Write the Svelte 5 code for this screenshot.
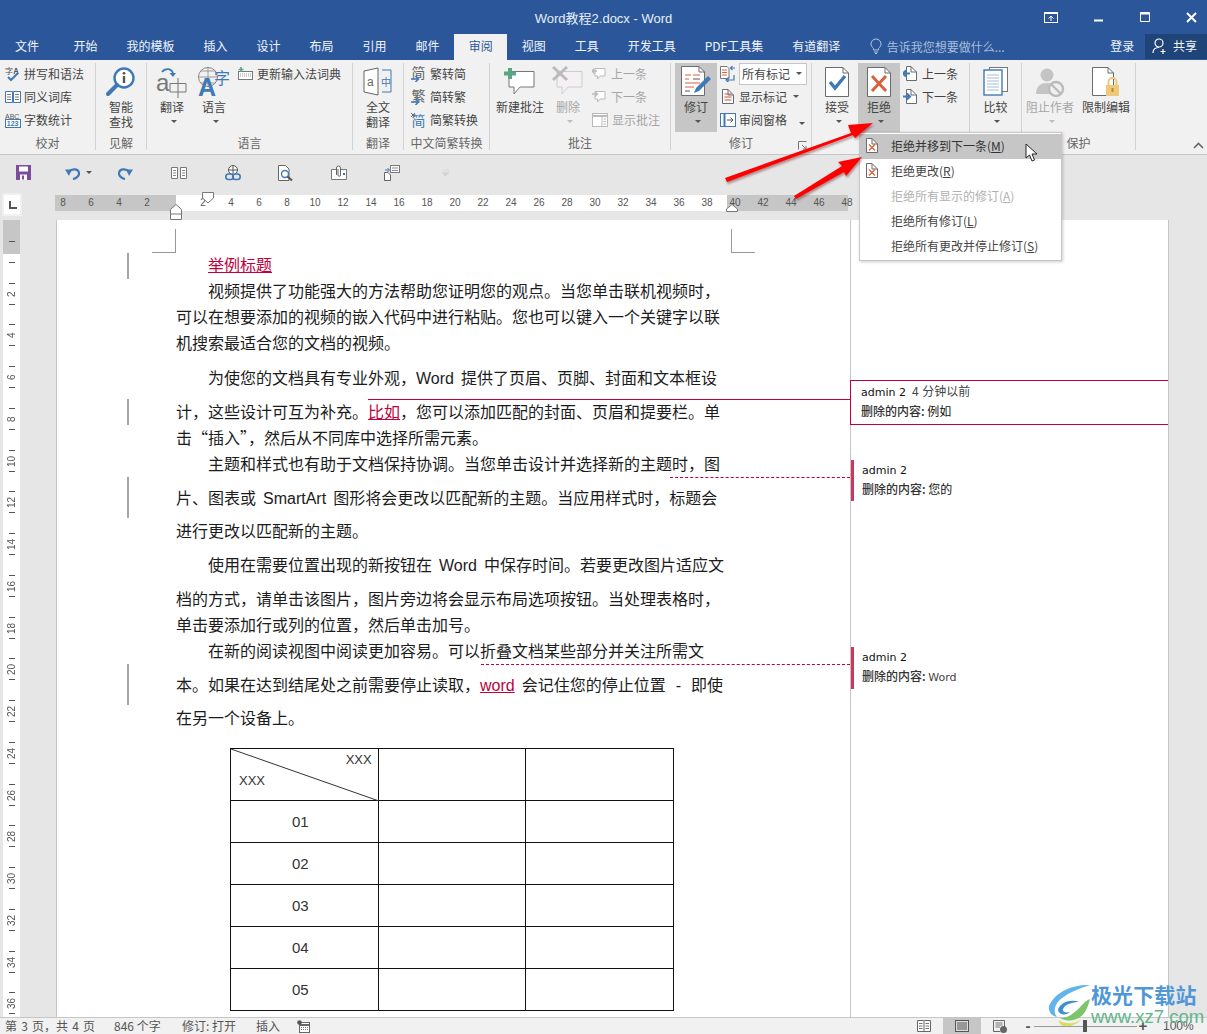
<script>
  const tabs = ['开始', '我的模板', '插入', '设计', '布局', '引用', '邮件', '审阅', '视图', '工具', '开发工具', 'PDF工具集', '有道翻译'];

  const marks = [];
  for (let n = 8; n >= 2; n -= 2) marks.push(n);
  marks.push('');
  for (let n = 2; n <= 48; n += 2) marks.push(n);

  const sideMarks = [''];
  for (let n = 2; n <= 38; n += 2) sideMarks.push(n);

  const lines = [
    { indent: true, parts: [{ t: '举例标题', k: 'ins' }] },
    { indent: true, parts: [{ t: '视频提供了功能强大的方法帮助您证明您的观点。当您单击联机视频时，' }] },
    { parts: [{ t: '可以在想要添加的视频的嵌入代码中进行粘贴。您也可以键入一个关键字以联' }] },
    { parts: [{ t: '机搜索最适合您的文档的视频。' }] },
    { gap: 9, indent: true, parts: [{ t: '为使您的文档具有专业外观，' }, { t: 'Word', k: 'en tight' }, { t: '提供了页眉、页脚、封面和文本框设' }] },
    { gap: 8, parts: [{ t: '计，这些设计可互为补充。' }, { t: '比如', k: 'ins' }, { t: '，您可以添加匹配的封面、页眉和提要栏。单' }] },
    { parts: [{ t: '击“插入”，然后从不同库中选择所需元素。' }] },
    { indent: true, parts: [{ t: '主题和样式也有助于文档保持协调。当您单击设计并选择新的主题时，图' }] },
    { gap: 8, parts: [{ t: '片、图表或' }, { t: 'SmartArt', k: 'en' }, { t: '图形将会更改以匹配新的主题。当应用样式时，标题会' }] },
    { gap: 7, parts: [{ t: '进行更改以匹配新的主题。' }] },
    { gap: 8, indent: true, parts: [{ t: '使用在需要位置出现的新按钮在' }, { t: 'Word', k: 'en' }, { t: '中保存时间。若要更改图片适应文' }] },
    { gap: 8, parts: [{ t: '档的方式，请单击该图片，图片旁边将会显示布局选项按钮。当处理表格时，' }] },
    { parts: [{ t: '单击要添加行或列的位置，然后单击加号。' }] },
    { indent: true, parts: [{ t: '在新的阅读视图中阅读更加容易。可以折叠文档某些部分并关注所需文' }] },
    { gap: 8, parts: [{ t: '本。如果在达到结尾处之前需要停止读取，' }, { t: 'word', k: 'en tight ins' }, { t: '会记住您的停止位置' }, { t: '-', k: 'en dash' }, { t: '即使' }] },
    { gap: 7, parts: [{ t: '在另一个设备上。' }] }
  ];

  const rows = ['01', '02', '03', '04', '05'];
</script>

{#snippet page(w, h)}
  <path d="M{0.5} {0.5}H{w - 6}L{w - 0.5} 6V{h - 0.5}H0.5Z" fill="#fff" stroke="#6b6b6b" />
  <path d="M{w - 6} 0.5V6H{w - 0.5}" fill="none" stroke="#6b6b6b" />
{/snippet}

{#snippet caret()}
  <span class="caret"></span>
{/snippet}

{#snippet bubble(c)}
  <path d="M3 1.5H13V9H8L5.5 12V9H3Z" fill="#fff" stroke={c} />
{/snippet}

<div class="app">
  <header class="title">
    <span></span>
    <div class="title-text">Word教程2.docx - Word</div>
    <div class="win">
      <svg width="14" height="12" viewBox="0 0 14 12"><rect x="0.5" y="1.5" width="13" height="10" fill="none" stroke="#fff" /><path d="M0 2H14" stroke="#fff" stroke-width="2" /><path d="M7 10V5M4.5 7.5L7 5L9.5 7.5" fill="none" stroke="#fff" /></svg>
      <svg width="10" height="10" viewBox="0 0 10 10"><path d="M0 8.5H9" stroke="#fff" stroke-width="2" /></svg>
      <svg width="10" height="10" viewBox="0 0 10 10"><path d="M0.5 0.5H9.5V9.5H0.5Z" fill="none" stroke="#fff" /><path d="M0 1.5H10" stroke="#fff" stroke-width="2" /></svg>
      <svg width="11" height="11" viewBox="0 0 11 11"><path d="M1 1L10 10M10 1L1 10" stroke="#fff" stroke-width="2" /></svg>
    </div>
  </header>

  <nav class="tabs">
    <div class="tab file">文件</div>
    {#each tabs as t}
      <div class="tab" class:on={t === '审阅'}>{t}</div>
    {/each}
    <div class="tell">
      <svg width="12" height="16" viewBox="0 0 12 16"><path d="M3.5 10.5C2 9 1 7.8 1 6A5 5 0 0 1 11 6C11 7.8 10 9 8.5 10.5V12H3.5ZM4 14H8M5 15.5H7" fill="none" stroke="#b7c8e0" /></svg>
      <span>告诉我您想要做什么...</span>
    </div>
    <div class="login">登录</div>
    <div class="share">
      <svg width="16" height="16" viewBox="0 0 16 16"><circle cx="7" cy="5" r="4" fill="none" stroke="#fff" stroke-width="1.2" /><path d="M1 15C1 11 4 9.5 7 9.5M11 11V16M8.5 13.5H13.5" fill="none" stroke="#fff" stroke-width="1.2" /></svg>
      <span>共享</span>
    </div>
  </nav>

  <section class="ribbon">
    <div class="group g1">
      <div class="body col">
        <div class="row">
          <svg class="si" width="16" height="16" viewBox="0 0 16 16"><text x="0" y="8" font-size="8" fill="#555">字</text><text x="8.5" y="7.5" font-size="8" font-weight="700" fill="#555">A</text><path d="M3 11L6 14L13 7" fill="none" stroke="#3f79b6" stroke-width="2" /></svg>
          拼写和语法
        </div>
        <div class="row">
          <svg class="si" width="16" height="14" viewBox="0 0 16 14"><path d="M0.5 1.5H7.5V12.5H0.5ZM8.5 1.5H15.5V12.5H8.5Z" fill="#fff" stroke="#3f79b6" /><path d="M2 4.5H6M2 7H6M2 9.5H6M10 4.5H14M10 7H14M10 9.5H14" stroke="#777" /></svg>
          同义词库
        </div>
        <div class="row">
          <svg class="si" width="16" height="16" viewBox="0 0 16 16"><text x="0" y="6.5" font-size="7" fill="#555" font-family="Liberation Sans">ABC</text><rect x="0.5" y="7.5" width="15" height="8" fill="#fff" stroke="#3f79b6" /><text x="1.8" y="14" font-size="7" font-weight="700" fill="#3f79b6" font-family="Liberation Sans">123</text></svg>
          字数统计
        </div>
      </div>
      <div class="glabel">校对</div>
    </div>

    <div class="group g2">
      <div class="body center">
        <div class="big">
          <svg class="bi" width="30" height="30" viewBox="0 0 30 30"><circle cx="18" cy="11" r="9.5" fill="#fff" stroke="#3f79b6" stroke-width="2.4" /><path d="M11 18L2 27" stroke="#3f79b6" stroke-width="4" stroke-linecap="round" /><path d="M18 9V16" stroke="#555" stroke-width="2.4" /><circle cx="18" cy="6.3" r="1.4" fill="#555" /></svg>
          <span>智能</span><span>查找</span>
        </div>
      </div>
      <div class="glabel">见解</div>
    </div>

    <div class="group g3">
      <div class="body">
        <div class="big">
          <svg class="bi" width="32" height="32" viewBox="0 0 32 32"><text x="0" y="25" font-size="24" fill="#777" font-family="Liberation Sans">a</text><path d="M14 17.5H30V26H14ZM22 12V32" fill="none" stroke="#777" /><path d="M6 6C9 2 15 2 17 7" fill="none" stroke="#3f79b6" stroke-width="1.8" /><path d="M13.5 7H20L17 11Z" fill="#3f79b6" /></svg>
          <span>翻译</span>{@render caret()}
        </div>
        <div class="big">
          <svg class="bi" width="34" height="32" viewBox="0 0 34 32"><circle cx="11" cy="11" r="9.5" fill="none" stroke="#888" /><path d="M1.5 11H21M11 1.5V21M4 5H18M4 17H18" fill="none" stroke="#888" stroke-width="0.8" /><text x="1" y="30" font-size="25" font-weight="700" fill="#3f79b6" font-family="Liberation Sans">A</text><text x="17" y="18" font-size="16" fill="#3f79b6">字</text></svg>
          <span>语言</span>{@render caret()}
        </div>
        <div class="col list">
          <div class="row">
            <svg class="si" width="15" height="14" viewBox="0 0 15 14"><rect x="0.5" y="4.5" width="14" height="8" fill="#fff" stroke="#777" /><path d="M2 7H13M2 9H13" stroke="#999" stroke-dasharray="1 1" /><path d="M3 0V5M0.5 2.5H5.5" stroke="#5ba585" stroke-width="1.6" /></svg>
            更新输入法词典
          </div>
        </div>
      </div>
      <div class="glabel">语言</div>
    </div>

    <div class="group g4">
      <div class="body center">
        <div class="big">
          <svg class="bi" width="30" height="30" viewBox="0 0 30 30"><path d="M1 4L15 1V28L1 25Z" fill="#fff" stroke="#666" /><text x="4" y="19" font-size="12" fill="#666" font-family="Liberation Sans">a</text><path d="M19 3H28V25H19" fill="none" stroke="#3f79b6" /><text x="18" y="19" font-size="10" fill="#3f79b6">中</text></svg>
          <span>全文</span><span>翻译</span>
        </div>
      </div>
      <div class="glabel">翻译</div>
    </div>

    <div class="group g5">
      <div class="body col">
        <div class="row">
          <svg class="si" width="15" height="16" viewBox="0 0 15 16"><text x="0.5" y="12" font-size="14" fill="#666">简</text><path d="M0 13H7M4.5 10L7.5 13L4.5 16" fill="none" stroke="#3f79b6" stroke-width="1.5" /></svg>
          繁转简
        </div>
        <div class="row">
          <svg class="si" width="15" height="16" viewBox="0 0 15 16"><text x="0.5" y="12" font-size="14" fill="#666">繁</text><path d="M0 13H7M4.5 10L7.5 13L4.5 16" fill="none" stroke="#3f79b6" stroke-width="1.5" /></svg>
          简转繁
        </div>
        <div class="row">
          <svg class="si" width="15" height="16" viewBox="0 0 15 16"><text x="0.5" y="14" font-size="14" fill="#3f79b6">简</text><path d="M0 1L4 5M4 1L0 5" stroke="#666" /></svg>
          简繁转换
        </div>
      </div>
      <div class="glabel">中文简繁转换</div>
    </div>

    <div class="group g6">
      <div class="body">
        <div class="big wide">
          <svg class="bi" width="32" height="30" viewBox="0 0 32 30"><path d="M5 4.5H30V20H16L10 27V20H5Z" fill="#fff" stroke="#777" /><path d="M0 6.5H12M6 1V12" stroke="#5ba585" stroke-width="4" /></svg>
          <span>新建批注</span>
        </div>
        <div class="big rm off">
          <svg class="bi" width="32" height="30" viewBox="0 0 32 30"><path d="M5 4.5H30V20H16L10 27V20H5Z" fill="#f4f0f4" stroke="#ccc" /><path d="M1 0L15 13M15 0L1 13" stroke="#bbb" stroke-width="3" /></svg>
          <span>删除</span>{@render caret()}
        </div>
        <div class="col list l6">
          <div class="row off">
            <svg class="si" width="15" height="14" viewBox="0 0 15 14">{@render bubble('#bbb')}<path d="M0 4H5M2.5 1.5L0 4L2.5 6.5" fill="none" stroke="#bbb" stroke-width="1.4" /></svg>
            上一条
          </div>
          <div class="row off">
            <svg class="si" width="15" height="14" viewBox="0 0 15 14">{@render bubble('#bbb')}<path d="M0 4H5M3 1.5L5.5 4L3 6.5" fill="none" stroke="#bbb" stroke-width="1.4" /></svg>
            下一条
          </div>
          <div class="row off">
            <svg class="si" width="16" height="14" viewBox="0 0 16 14"><rect x="0.5" y="0.5" width="15" height="13" fill="#fff" stroke="#bbb" /><path d="M0 3H16" stroke="#bbb" stroke-width="2" /><path d="M10 3V14M11.5 6H14M11.5 8.5H14M11.5 11H14" stroke="#bbb" /></svg>
            显示批注
          </div>
        </div>
      </div>
      <div class="glabel">批注</div>
    </div>

    <div class="group g7">
      <div class="body">
        <div class="big active">
          <svg class="bi" width="32" height="32" viewBox="0 0 32 32"><g transform="translate(1 0)">{@render page(24, 30)}</g><path d="M5 9H11M13 9H20M5 13H9M5 17H20M5 21H14" stroke="#d8613c" /><path d="M13 13H20M5 25H10" stroke="#555" /><path d="M14 27L16 22L28 10L31 13L19 25Z" fill="#3f79b6" /></svg>
          <span>修订</span>{@render caret()}
        </div>
        <div class="col list l7">
          <div class="row">
            <svg class="si" width="16" height="16" viewBox="0 0 16 16"><path d="M0.5 0.5H7L9 2.5V12.5H0.5Z" fill="#fff" stroke="#777" /><path d="M2 4H7M2 6.5H7M2 9H7" stroke="#d8613c" /><path d="M11 2H15M12.5 0L10.5 2L12.5 4M8 14H14V9M6 14L8 12V16Z" fill="none" stroke="#3f79b6" stroke-width="1.2" /></svg>
            <div class="select">所有标记{@render caret()}</div>
          </div>
          <div class="row">
            <svg class="si" width="16" height="16" viewBox="0 0 16 16"><g transform="translate(2 0)">{@render page(12, 15)}</g><path d="M4.5 5H11.5M4.5 8H11.5M4.5 11H11.5" stroke="#c8553a" /></svg>
            显示标记{@render caret()}
          </div>
          <div class="row">
            <svg class="si" width="16" height="14" viewBox="0 0 16 14"><rect x="0.5" y="0.5" width="15" height="13" fill="#fff" stroke="#3f79b6" /><path d="M4.5 0V14" stroke="#3f79b6" stroke-width="2" /><path d="M7 7H13M10.5 4.5L13 7L10.5 9.5" fill="none" stroke="#555" /></svg>
            审阅窗格<span class="spaced">{@render caret()}</span>
          </div>
        </div>
      </div>
      <div class="glabel">修订</div>
      <svg class="launch" width="9" height="9" viewBox="0 0 9 9"><path d="M0.5 8.5V0.5H8.5M4 4L8 8M8 5V8H5" fill="none" stroke="#777" /></svg>
    </div>

    <div class="group g8">
      <div class="body">
        <div class="big">
          <svg class="bi" width="24" height="30" viewBox="0 0 24 30">{@render page(24, 30)}<path d="M5 15L10 21L20 9" fill="none" stroke="#3f79b6" stroke-width="3.4" /></svg>
          <span>接受</span>{@render caret()}
        </div>
        <div class="big active">
          <svg class="bi" width="24" height="30" viewBox="0 0 24 30">{@render page(24, 30)}<path d="M5 9L19 24M19 9L5 24" stroke="#d8613c" stroke-width="3" /></svg>
          <span>拒绝</span>{@render caret()}
        </div>
        <div class="col list">
          <div class="row">
            <svg class="si" width="15" height="16" viewBox="0 0 15 16"><g transform="translate(3 0)">{@render page(11, 15)}</g><path d="M0 7.5H7M3 4.5L0 7.5L3 10.5" fill="none" stroke="#3f79b6" stroke-width="2" /></svg>
            上一条
          </div>
          <div class="row">
            <svg class="si" width="15" height="16" viewBox="0 0 15 16"><g transform="translate(3 0)">{@render page(11, 15)}</g><path d="M0 7.5H7M4 4.5L7 7.5L4 10.5" fill="none" stroke="#3f79b6" stroke-width="2" /></svg>
            下一条
          </div>
        </div>
      </div>
    </div>

    <div class="group g9">
      <div class="body center">
        <div class="big">
          <svg class="bi" width="26" height="30" viewBox="0 0 26 30"><rect x="6.5" y="0.5" width="18" height="24" fill="#fff" stroke="#777" /><rect x="1" y="3" width="18" height="25" fill="#fff" stroke="#3f79b6" stroke-width="1.4" /><path d="M4 8H16M4 11H16M4 14H16M4 17H16M4 20H16M4 23H16" stroke="#a3bcd8" /></svg>
          <span>比较</span>{@render caret()}
        </div>
      </div>
    </div>

    <div class="group g10">
      <div class="body">
        <div class="big wide off">
          <svg class="bi" width="30" height="30" viewBox="0 0 30 30"><circle cx="12" cy="8" r="6.5" fill="#c4c4c4" /><path d="M1 27C1 19 6 16 12 16C16 16 17 18 17 21L16 27Z" fill="#c4c4c4" /><circle cx="21" cy="22" r="7" fill="#f1f1f1" stroke="#bbb" stroke-width="2.4" /><path d="M16 17L26 27" stroke="#bbb" stroke-width="2.4" /></svg>
          <span>阻止作者</span>{@render caret()}
        </div>
        <div class="big wide">
          <svg class="bi" width="28" height="30" viewBox="0 0 28 30">{@render page(22, 29)}<rect x="14" y="18" width="13" height="11" fill="#efc87a" /><path d="M16.5 18V15A4 4 0 0 1 24.5 15V18" fill="none" stroke="#efc87a" stroke-width="2" /><rect x="19.5" y="21" width="2" height="4" fill="#b98b35" /></svg>
          <span>限制编辑</span>
        </div>
      </div>
      <div class="glabel">保护</div>
    </div>

    <svg class="collapse" width="11" height="7" viewBox="0 0 11 7"><path d="M1 6L5.5 1.5L10 6" fill="none" stroke="#666" stroke-width="1.6" /></svg>
  </section>

  <div class="qat">
    <div class="cell first">
      <svg width="15" height="15" viewBox="0 0 15 15"><path d="M0 0H15V15H0Z" fill="#7d4c9e" /><rect x="3" y="1.5" width="9" height="5" fill="#fff" /><rect x="4" y="9.5" width="7" height="5.5" fill="#fff" /><rect x="6" y="10.5" width="2" height="4" fill="#7d4c9e" /></svg>
    </div>
    <div class="cell undo">
      <svg width="15" height="14" viewBox="0 0 15 14"><path d="M4 7C5 3 13 1.5 14 7C14.5 10 11 12.5 8 13" fill="none" stroke="#3f79b6" stroke-width="2.2" /><path d="M0 3.5L6.5 3.5L4 10Z" fill="#3f79b6" /></svg>
      {@render caret()}
    </div>
    <div class="cell">
      <svg width="15" height="14" viewBox="0 0 15 14"><path d="M11 7C10 3 2 1.5 1 7C0.5 10 4 12.5 7 13" fill="none" stroke="#3f79b6" stroke-width="2.2" /><path d="M15 3.5L8.5 3.5L11 10Z" fill="#3f79b6" /></svg>
    </div>
    <div class="cell">
      <svg width="16" height="12" viewBox="0 0 16 12"><path d="M0.5 0.5H6.5V11.5H0.5ZM9.5 0.5H15.5V11.5H9.5Z" fill="#fff" stroke="#777" /><path d="M2 3.5H5M2 6H5M2 8.5H5M11 3.5H14M11 6H14M11 8.5H14" stroke="#888" /></svg>
    </div>
    <div class="cell">
      <svg width="16" height="16" viewBox="0 0 16 16"><circle cx="8" cy="5" r="4.5" fill="#fff" stroke="#555" /><path d="M3.5 5H12.5M8 0.5V9" stroke="#555" /><rect x="0.8" y="9" width="7.5" height="5.5" rx="2.7" fill="none" stroke="#3f79b6" stroke-width="1.6" /><rect x="7.7" y="9" width="7.5" height="5.5" rx="2.7" fill="none" stroke="#3f79b6" stroke-width="1.6" /></svg>
    </div>
    <div class="cell">
      <svg width="15" height="16" viewBox="0 0 15 16"><path d="M0.5 0.5H7.5L11 4V15.5H0.5Z" fill="#fff" stroke="#666" /><circle cx="7" cy="9" r="3.5" fill="#fff" stroke="#3f79b6" stroke-width="1.4" /><path d="M9.5 11.5L14 15.5" stroke="#555" stroke-width="2" /></svg>
    </div>
    <div class="cell">
      <svg width="16" height="15" viewBox="0 0 16 15"><path d="M0.5 4.5H15.5V14.5H0.5Z" fill="#fff" stroke="#777" /><path d="M5.5 10V3A2 2 0 0 1 9.5 3V10A1.2 1.2 0 0 1 7 10V4" fill="#fff" stroke="#666" /><rect x="12" y="8" width="2" height="2" fill="#3f79b6" /></svg>
    </div>
    <div class="cell">
      <svg width="16" height="16" viewBox="0 0 16 16"><path d="M0.5 7.5H4L6.5 10V15.5H0.5Z" fill="#fff" stroke="#666" /><rect x="6.5" y="0.5" width="9" height="7" fill="#fff" stroke="#777" /><path d="M8 3H14M8 5.5H14" stroke="#888" /><path d="M1 5H5M3.5 3L5.5 5L3.5 7" fill="none" stroke="#3f79b6" /></svg>
    </div>
    <div class="cell faint">
      <svg width="7" height="8" viewBox="0 0 7 8"><path d="M0 1H7M0 3.5H7L3.5 7.5Z" fill="#d4d4d4" stroke="#d4d4d4" stroke-width="0.6" /></svg>
    </div>
  </div>

  <div class="ruler-row">
    <div class="tabstop"><span></span></div>
    <div class="ruler">
      <div class="ruler-margin"></div>
      <div class="ruler-text"></div>
      <div class="ruler-margin right"></div>
      <div class="ruler-nums">
        {#each marks as m}
          <span>{m}</span>
        {/each}
      </div>
      <svg class="indent-top" width="12" height="14" viewBox="0 0 12 14"><path d="M0.5 0.5H11.5V6L6 11L0.5 6Z" fill="#fff" stroke="#777" /></svg>
      <svg class="indent-bottom" width="12" height="16" viewBox="0 0 12 16"><path d="M0.5 5.5L6 0.5L11.5 5.5V15.5H0.5ZM0.5 10H11.5" fill="#fff" stroke="#777" /></svg>
      <svg class="indent-right" width="12" height="8" viewBox="0 0 12 8"><path d="M0.5 7.5V5L6 0.5L11.5 5V7.5Z" fill="#fff" stroke="#777" /></svg>
    </div>
  </div>

  <div class="work">
    <div class="vruler">
      <div class="vdark"></div>
      <div class="vmarks">
        {#each sideMarks as m}
          <div class="vcell"><i></i><b>{m}</b><i></i></div>
        {/each}
      </div>
    </div>

    <div class="page">
      <div class="doc">
        <span class="crop left"></span>
        <span class="crop right"></span>
        <span class="bar" style="top:33px;height:26px"></span>
        <span class="bar" style="top:179px;height:26px"></span>
        <span class="bar" style="top:257px;height:41px"></span>
        <span class="bar" style="top:444px;height:41px"></span>
        <span class="link solid" style="left:311px;width:482px;top:179px"></span>
        <span class="link" style="left:613px;width:180px;top:257px"></span>
        <span class="link" style="left:424px;width:369px;top:444px"></span>

        {#each lines as l}
          <div class="line" class:indent={l.indent} style:margin-top="{l.gap || 0}px">
            {#each l.parts as p}<span class={p.k}>{p.t}</span>{/each}
          </div>
        {/each}

        <table>
          <tbody>
            <tr class="head">
              <td class="diag">
                <svg width="148" height="52" viewBox="0 0 148 52"><path d="M0 0L148 52" stroke="#333" /></svg>
                <span class="xa">XXX</span>
                <span class="xb">XXX</span>
              </td>
              <td></td>
              <td></td>
            </tr>
            {#each rows as r}
              <tr>
                <td class="num">{r}</td>
                <td></td>
                <td></td>
              </tr>
            {/each}
          </tbody>
        </table>
      </div>

      <aside class="notes">
        <div class="note first">
          <div><span class="who">admin 2</span><span class="ago">4 分钟以前</span></div>
          <div><span class="del">删除的内容:</span> 例如</div>
        </div>
        <div class="note second">
          <div><span class="who">admin 2</span></div>
          <div><span class="del">删除的内容:</span> 您的</div>
        </div>
        <div class="note third">
          <div><span class="who">admin 2</span></div>
          <div><span class="del">删除的内容:</span> <span class="when">Word</span></div>
        </div>
      </aside>
    </div>
  </div>

  <footer class="status">
    <span class="s1">第 3 页，共 4 页</span>
    <span class="s2">846 个字</span>
    <span class="s3">修订: 打开</span>
    <span class="s4">插入</span>
    <svg width="13" height="13" viewBox="0 0 13 13"><rect x="2.5" y="2.5" width="10" height="10" fill="#fff" stroke="#666" /><path d="M2 5H13" stroke="#666" stroke-width="2" /><path d="M4 7.5H11M4 9.5H11" stroke="#777" stroke-dasharray="1 1" /><circle cx="2.5" cy="2.5" r="2.3" fill="#555" /></svg>
    <div class="views">
      <div class="view">
        <svg width="14" height="12" viewBox="0 0 14 12"><path d="M0.5 0.5H6.5L7 1L7.5 0.5H13.5V11.5H0.5ZM7 1V11.5" fill="#fff" stroke="#666" /><path d="M2 3.5H5.5M2 6H5.5M2 8.5H5.5M8.5 3.5H12M8.5 6H12M8.5 8.5H12" stroke="#777" /></svg>
      </div>
      <div class="view on">
        <svg width="14" height="12" viewBox="0 0 14 12"><rect x="0.5" y="0.5" width="13" height="11" fill="#dcdcdc" stroke="#555" /><path d="M2 3H12M2 5H12M2 7H12M2 9H12" stroke="#555" /></svg>
      </div>
      <div class="view">
        <svg width="14" height="13" viewBox="0 0 14 13"><path d="M0.5 0.5H11.5V9" fill="none" stroke="#666" /><path d="M0.5 0.5V11.5H7" fill="none" stroke="#666" /><path d="M2.5 3H9.5M2.5 5H9.5M2.5 7H7" stroke="#777" /><circle cx="10.5" cy="9.5" r="3.5" fill="#666" /></svg>
      </div>
    </div>
    <div class="zoom">
      <span class="zm">-</span>
      <div class="slider"><span class="thumb"></span></div>
      <span class="zm">+</span>
      <span class="pct">100%</span>
    </div>
  </footer>

  <!-- dropdown for the 拒绝 button, open over the ribbon and the page -->
  <div class="menu">
    <div class="item hover">
      <svg width="12" height="15" viewBox="0 0 12 15">{@render page(12, 15)}<path d="M3 6.5L9 12.5M9 6.5L3 12.5" stroke="#d8613c" stroke-width="1.3" /></svg>
      <span>拒绝并移到下一条(<u>M</u>)</span>
    </div>
    <div class="item">
      <svg width="12" height="15" viewBox="0 0 12 15">{@render page(12, 15)}<path d="M3 6.5L9 12.5M9 6.5L3 12.5" stroke="#d8613c" stroke-width="1.3" /></svg>
      <span>拒绝更改(<u>R</u>)</span>
    </div>
    <div class="item dim"><span>拒绝所有显示的修订(<u>A</u>)</span></div>
    <div class="item"><span>拒绝所有修订(<u>L</u>)</span></div>
    <div class="item"><span>拒绝所有更改并停止修订(<u>S</u>)</span></div>
  </div>

  <svg class="pointer" width="14" height="20" viewBox="0 0 14 20"><path d="M1 1V15L4.5 12L7 18L9.5 17L7 11H12Z" fill="#fff" stroke="#222" /></svg>

  <svg class="arrows" width="1207" height="1034" viewBox="0 0 1207 1034">
    <path d="M725 178L851 133L848 125L873 123L855 138L853 135L727 182Z" fill="#f00" />
    <path d="M794 196L842 166L838 162L862 157L846 176L844 172L796 199Z" fill="#f00" />
  </svg>

  <div class="mark">
    <svg width="46" height="50" viewBox="0 0 46 50">
      <path d="M42 3C28 2 8 8 1 24C0 30 4 34 9 35C5 30 6 22 14 16C22 10 32 6 42 3Z" fill="#62b4ea" />
      <path d="M10 28C12 20 24 17 31 20C25 20 17 22 15 27C14 30 18 31 22 30C18 34 11 33 10 28Z" fill="#3b8fcf" />
      <path d="M42 17C36 19 34 24 28 29C22 34 18 36 12 36C20 41 32 38 37 30C39 26 41 22 42 17Z" fill="#7cc56a" />
      <path d="M10 38C18 43 28 42 33 37C29 43 20 46 13 43Z" fill="#d8dc60" />
    </svg>
    <div class="mark-text">
      <div class="mk1">极光下载站</div>
      <div class="mk2">www.xz7.com</div>
    </div>
  </div>
</div>

<style>
  :global(body) {
    margin: 0;
    background: #e6e6e6;
  }

  .app {
    position: relative;
    width: 1207px;
    height: 1034px;
    overflow: hidden;
    display: flex;
    flex-direction: column;
    font-family: "Noto Sans CJK SC", "Liberation Sans", sans-serif;
    font-size: 12px;
    color: #444;
  }

  .title {
    height: 34px;
    flex: none;
    background: #2b579a;
    display: grid;
    grid-template-columns: 1fr auto 1fr;
    align-items: center;
    color: #fff;
  }

  .title-text {
    font-size: 13px;
    font-family: "Liberation Sans", "Noto Sans CJK SC", sans-serif;
    color: #e8eef6;
  }

  .win {
    display: flex;
    justify-content: flex-end;
    align-items: center;
    gap: 36px;
    padding-right: 10px;
  }

  .tabs {
    height: 26px;
    flex: none;
    background: #2b579a;
    display: flex;
    align-items: stretch;
    color: #f2f5fa;
  }

  .tab {
    padding: 0 14.5px 2px;
    line-height: 24px;
    white-space: nowrap;
  }

  .tab.file {
    padding: 0 20px 2px 15px;
  }

  .tab.on {
    background: #f1f1f1;
    color: #2b579a;
  }

  .tell {
    margin-left: 15px;
    display: flex;
    align-items: center;
    gap: 5px;
    color: #a9bdd9;
    width: 241px;
    padding-bottom: 2px;
  }

  .login {
    line-height: 24px;
    width: 35px;
  }

  .share {
    width: 62px;
    background: #1f4478;
    display: flex;
    align-items: center;
    gap: 5px;
    padding: 0 0 2px 7px;
    box-sizing: border-box;
    height: 25px;
  }

  .ribbon {
    position: relative;
    height: 95px;
    flex: none;
    box-sizing: border-box;
    background: #f1f1f1;
    border-bottom: 1px solid #c6c6c6;
    display: flex;
  }

  .group {
    position: relative;
    box-sizing: border-box;
    margin-top: 3px;
    height: 87px;
    border-right: 1px solid #d2d2d2;
    display: flex;
    flex-direction: column;
    flex: none;
  }

  .body {
    height: 69px;
    display: flex;
  }

  .body.col,
  .col {
    display: flex;
    flex-direction: column;
  }

  .body.center {
    justify-content: center;
  }

  .glabel {
    text-align: center;
    line-height: 21px;
    color: #666;
  }

  .g1 { width: 96px; }
  .g2 { width: 51px; }
  .g3 { width: 206px; }
  .g4 { width: 51px; }
  .g5 { width: 86px; }
  .g6 { width: 181px; }
  .g7 { width: 141px; }
  .g8 { width: 158px; }
  .g9 { width: 52px; }
  .g10 { width: 114px; }

  .g1 .body { padding-left: 5px; }
  .g1 .row { gap: 3px; }
  .g3 .body { padding-left: 4px; }
  .g5 .body { padding-left: 7px; }
  .g6 .body { padding-left: 2px; }
  .g7 .body { padding-left: 4px; }
  .g8 .body { padding-left: 4px; }

  .list { margin-left: 3px; }
  .l6 { margin-left: 6px; }

  .row {
    height: 23px;
    box-sizing: border-box;
    padding-bottom: 2px;
    display: flex;
    align-items: center;
    white-space: nowrap;
    gap: 4px;
  }

  .l7 .row { gap: 3px; }

  .si { flex: none; }

  .big {
    width: 42px;
    height: 69px;
    box-sizing: border-box;
    display: flex;
    flex-direction: column;
    align-items: center;
    line-height: 15px;
    flex: none;
  }

  .big.wide { width: 56px; }
  .big.rm { width: 36px; margin-left: 2px; }

  .bi {
    height: 32px;
    margin: 3px 0 1px;
    flex: none;
  }

  .big .caret { margin-top: 6px; }

  .active { background: #c6c6c6; }

  .off { color: #a6a6a6; }

  .caret {
    display: inline-block;
    width: 0;
    height: 0;
    border: 3px solid transparent;
    border-top: 3.5px solid #555;
    border-bottom: 0;
    margin-left: 3px;
  }

  .off .caret { border-top-color: #bbb; }

  .spaced { margin-left: 6px; }

  .select {
    width: 68px;
    height: 22px;
    box-sizing: border-box;
    border: 1px solid #c6c6c6;
    background: #fff;
    display: flex;
    align-items: center;
    justify-content: space-between;
    padding: 0 4px 0 2px;
  }

  .launch {
    position: absolute;
    right: 4px;
    bottom: 0;
  }

  .collapse {
    position: absolute;
    right: 3px;
    bottom: 5px;
  }

  .qat {
    height: 35px;
    flex: none;
    background: #e6e6e6;
    display: flex;
    align-items: center;
  }

  .cell {
    width: 53.3px;
    flex: none;
    display: flex;
    justify-content: center;
    align-items: center;
  }

  .cell.first { width: 46px; }

  .cell.undo {
    justify-content: flex-start;
    padding-left: 19px;
    box-sizing: border-box;
    gap: 3px;
  }

  .ruler-row {
    height: 30px;
    flex: none;
    background: #e6e6e6;
    display: flex;
  }

  .tabstop {
    width: 20px;
    height: 23px;
    margin: 3px 0 0 2px;
    box-sizing: border-box;
    background: #fff;
    border: 2px solid #f0f0f0;
    position: relative;
    flex: none;
  }

  .tabstop span {
    position: absolute;
    left: 5px;
    top: 6px;
    width: 6px;
    height: 6px;
    border-left: 2px solid #555;
    border-bottom: 2px solid #555;
  }

  .ruler {
    position: relative;
    margin: 5px 0 0 33px;
    width: 793px;
    height: 16px;
    display: flex;
  }

  .ruler-margin {
    width: 121px;
    background: #c6c6c6;
  }

  .ruler-margin.right { width: 121px; }

  .ruler-text {
    width: 551px;
    background: #fff;
  }

  .ruler-nums {
    position: absolute;
    left: -6px;
    top: 0;
    display: flex;
    font-family: "Liberation Sans", sans-serif;
    font-size: 10px;
    line-height: 16px;
    color: #555;
  }

  .ruler-nums span {
    width: 28px;
    text-align: center;
  }

  .indent-top {
    position: absolute;
    left: 147px;
    top: -3px;
  }

  .indent-bottom {
    position: absolute;
    left: 115px;
    top: 9px;
  }

  .indent-right {
    position: absolute;
    left: 671px;
    top: 9px;
  }

  .work {
    flex: 1;
    min-height: 0;
    background: #e6e6e6;
    display: flex;
    border-bottom: 1px solid #c6c6c6;
  }

  .vruler {
    position: relative;
    width: 17px;
    margin-left: 3px;
    background: #fff;
    overflow: hidden;
    flex: none;
  }

  .vdark {
    height: 34px;
    background: #c6c6c6;
  }

  .vmarks {
    position: absolute;
    left: 0;
    top: 11px;
    width: 100%;
  }

  .vcell {
    height: 41.75px;
    display: flex;
    flex-direction: column;
    align-items: center;
    justify-content: center;
    gap: 3px;
  }

  .vcell i {
    width: 6px;
    height: 1px;
    background: #555;
    flex: none;
  }

  .vcell b {
    height: 14px;
    font-weight: 400;
    font-family: "Liberation Sans", sans-serif;
    font-size: 10px;
    line-height: 17px;
    color: #555;
    writing-mode: vertical-rl;
    transform: rotate(180deg);
    text-align: center;
  }

  .page {
    margin-left: 36px;
    width: 1111px;
    background: #fff;
    border-left: 1px solid #c6c6c6;
    border-right: 1px solid #c6c6c6;
    display: flex;
    box-sizing: content-box;
  }

  .doc {
    position: relative;
    width: 793px;
    flex: none;
    box-sizing: border-box;
    padding: 31px 0 0 119px;
    font-size: 16px;
    color: #1c1c1c;
  }

  .crop {
    position: absolute;
    top: 9px;
    width: 23px;
    height: 23px;
    border-bottom: 1px solid #999;
  }

  .crop.left {
    left: 95px;
    border-right: 1px solid #999;
  }

  .crop.right {
    left: 674px;
    border-left: 1px solid #999;
  }

  .bar {
    position: absolute;
    left: 70px;
    width: 2px;
    background: #a6a6a6;
  }

  .link {
    position: absolute;
    height: 0;
    border-top: 1px dashed #c0003c;
  }

  .link.solid {
    border-top-style: solid;
  }

  .line {
    height: 26px;
    line-height: 26px;
    white-space: nowrap;
  }

  .line.indent {
    padding-left: 32px;
  }

  .en {
    font-family: "Liberation Sans", sans-serif;
    margin: 0 7px;
  }

  .tight {
    margin-left: 0;
  }

  .dash {
    margin: 0 10px;
  }

  .ins {
    color: #c0003c;
    text-decoration: underline;
  }

  table {
    margin: 18px 0 0 54px;
    border-collapse: collapse;
    table-layout: fixed;
    width: 444px;
    font-family: "Liberation Sans", sans-serif;
    font-size: 15px;
    color: #333;
  }

  td {
    border: 1px solid #111;
    height: 41px;
    padding: 0;
    text-align: center;
  }

  .num {
    padding-right: 8px;
  }

  .head td {
    height: 51px;
  }

  .diag {
    position: relative;
  }

  .diag svg {
    position: absolute;
    left: 0;
    top: 0;
  }

  .xa,
  .xb {
    position: absolute;
    font-size: 13px;
  }

  .xa {
    right: 6px;
    top: 3px;
  }

  .xb {
    left: 8px;
    top: 24px;
  }

  .notes {
    flex: 1;
    border-left: 1px solid #c6c6c6;
    font-size: 12px;
    color: #111;
    line-height: 18px;
  }

  .note {
    box-sizing: border-box;
    padding-left: 10px;
    margin-left: -1px;
  }

  .note.first {
    margin-top: 160px;
    height: 45px;
    padding-top: 1px;
    border: 1px solid #c0003c;
    border-right: 0;
  }

  .note.second {
    margin-top: 35px;
    height: 41px;
    border-left: 3px solid #c8385f;
    margin-left: 0;
    padding-left: 8px;
  }

  .note.third {
    margin-top: 146px;
    height: 42px;
    border-left: 3px solid #c8385f;
    margin-left: 0;
    padding-left: 8px;
  }

  .who,
  .when {
    font-family: "DejaVu Sans", "Noto Sans CJK SC", sans-serif;
    font-size: 11px;
  }

  .when {
    color: #444;
  }

  .ago {
    margin-left: 6px;
    color: #444;
    word-spacing: 1px;
  }

  .del {
    font-weight: 500;
    color: #333;
  }

  .status {
    height: 16px;
    flex: none;
    background: #f1f1f1;
    display: flex;
    align-items: center;
    font-size: 12px;
    line-height: 16px;
    color: #555;
    white-space: nowrap;
  }

  .s1 { margin-left: 5px; width: 109px; word-spacing: 1.5px; }
  .s2 { width: 68px; }
  .s3 { width: 74px; }
  .s4 { width: 41px; }

  .views {
    display: flex;
    margin-left: 595px;
    height: 100%;
  }

  .view {
    width: 38px;
    display: flex;
    align-items: center;
    justify-content: center;
  }

  .view.on {
    background: #c6c6c6;
  }

  .zoom {
    margin-left: 3px;
    display: flex;
    align-items: center;
    height: 100%;
  }

  .zm {
    width: 12px;
    text-align: center;
    font-size: 15px;
    font-weight: 700;
    font-family: "Liberation Sans", sans-serif;
  }

  .slider {
    position: relative;
    width: 103px;
    height: 1px;
    background: #999;
  }

  .thumb {
    position: absolute;
    left: 49px;
    top: -6px;
    width: 4px;
    height: 12px;
    background: #555;
  }

  .pct {
    margin-left: 14px;
    font-family: "Liberation Sans", sans-serif;
    font-size: 12px;
  }

  .menu {
    position: absolute;
    left: 859px;
    top: 132px;
    width: 203px;
    height: 129px;
    box-sizing: border-box;
    padding: 1px 0;
    background: #fff;
    border: 1px solid #c6c6c6;
    box-shadow: 1px 1px 3px rgba(0, 0, 0, 0.2);
  }

  .item {
    position: relative;
    height: 25px;
    box-sizing: border-box;
    padding: 0 0 2px 31px;
    display: flex;
    align-items: center;
    color: #444;
    white-space: nowrap;
  }

  .item svg {
    position: absolute;
    left: 6px;
    top: 4px;
  }

  .item.hover {
    background: #c6c6c6;
    color: #333;
  }

  .item.dim {
    color: #b1b1b1;
  }

  .pointer {
    position: absolute;
    left: 1025px;
    top: 143px;
  }

  .arrows {
    position: absolute;
    left: 0;
    top: 0;
    filter: drop-shadow(1px 2px 1px rgba(90, 0, 0, 0.4));
    pointer-events: none;
  }

  .mark {
    position: absolute;
    left: 1048px;
    top: 982px;
    display: flex;
  }

  .mark-text {
    margin: -2px 0 0 -3px;
  }

  .mk1 {
    font-size: 21px;
    font-weight: 700;
    line-height: 28px;
    color: #4f97d8;
    letter-spacing: 0.1px;
    white-space: nowrap;
  }

  .mk2 {
    font-family: "Liberation Sans", sans-serif;
    font-size: 18.5px;
    line-height: 18px;
    color: #63b58c;
    white-space: nowrap;
  }
</style>
